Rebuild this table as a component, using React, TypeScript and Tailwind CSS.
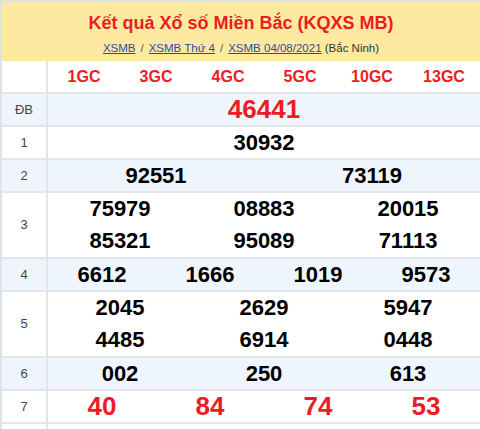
import React from 'react';

type Prize = {
  label: string;
  cols: number;
  values: string[];
  red?: boolean;
  big?: boolean;
};

const prizes: Prize[] = [
  { label: 'ĐB', cols: 1, values: ['46441'], red: true, big: true },
  { label: '1', cols: 1, values: ['30932'] },
  { label: '2', cols: 2, values: ['92551', '73119'] },
  { label: '3', cols: 3, values: ['75979', '08883', '20015', '85321', '95089', '71113'] },
  { label: '4', cols: 4, values: ['6612', '1666', '1019', '9573'] },
  { label: '5', cols: 3, values: ['2045', '2629', '5947', '4485', '6914', '0448'] },
  { label: '6', cols: 3, values: ['002', '250', '613'] },
  { label: '7', cols: 4, values: ['40', '84', '74', '53'], red: true, big: true },
];

const gridCols: Record<number, string> = {
  1: 'grid-cols-1',
  2: 'grid-cols-2',
  3: 'grid-cols-3',
  4: 'grid-cols-4',
};

const codes = ['1GC', '3GC', '4GC', '5GC', '10GC', '13GC'];

const App: React.FC = () => {
  return (
    <div className="w-[480px] bg-white border-t-2 border-l-2 border-[#dfe3e8] font-['Liberation_Sans',Arial,sans-serif]">
      {/* Title block */}
      <div className="bg-[#fee9a0] h-[59px] flex flex-col items-center pt-[10px]">
        <h1 className="text-[18px] leading-[22px] font-bold text-[#ed1c24]">
          Kết quả Xổ số Miền Bắc (KQXS MB)
        </h1>
        <div className="mt-[7px] text-[11.5px] leading-[14px] text-[#333]">
          <a className="text-[#2f4c9f] underline">XSMB</a>
          <span className="mx-[5px] text-[#555]">/</span>
          <a className="text-[#2f4c9f] underline">XSMB Thứ 4</a>
          <span className="mx-[5px] text-[#555]">/</span>
          <a className="text-[#2f4c9f] underline">XSMB 04/08/2021</a>
          <span> (Bắc Ninh)</span>
        </div>
      </div>

      {/* Codes row */}
      <div className="flex border-b-2 border-[#e2e6eb]">
        <div className="w-[46px] border-r-2 border-[#e2e6eb]" />
        <div className="flex-1 grid grid-cols-6 h-[31px] items-center">
          {codes.map((c) => (
            <div key={c} className="text-center text-[16px] font-bold text-[#ed1c24]">
              {c}
            </div>
          ))}
        </div>
      </div>

      {prizes.map((p, idx) => (
        <div
          key={p.label}
          className={`flex border-b-2 border-[#e2e6eb] ${idx % 2 === 0 ? 'bg-[#eef5fd]' : 'bg-white'}`}
        >
          <div className="w-[46px] border-r-2 border-[#e2e6eb] flex items-center justify-center text-[13px] text-[#444]">
            {p.label}
          </div>
          <div className={`flex-1 grid ${gridCols[p.cols]}`}>
            {p.values.map((v, i) => (
              <div
                key={i}
                className={`text-center font-bold ${
                  p.big ? 'text-[26px] leading-[31px]' : 'text-[22px] leading-[31px]'
                } ${p.values.length > p.cols ? 'h-[32px] leading-[32px]' : 'h-[31px]'} ${
                  p.red ? 'text-[#ed1c24]' : 'text-black'
                }`}
              >
                {v}
              </div>
            ))}
          </div>
        </div>
      ))}

      <div className="flex h-[40px]">
        <div className="w-[46px] border-r-2 border-[#e2e6eb]" />
        <div className="flex-1" />
      </div>
    </div>
  );
};

export default App;
